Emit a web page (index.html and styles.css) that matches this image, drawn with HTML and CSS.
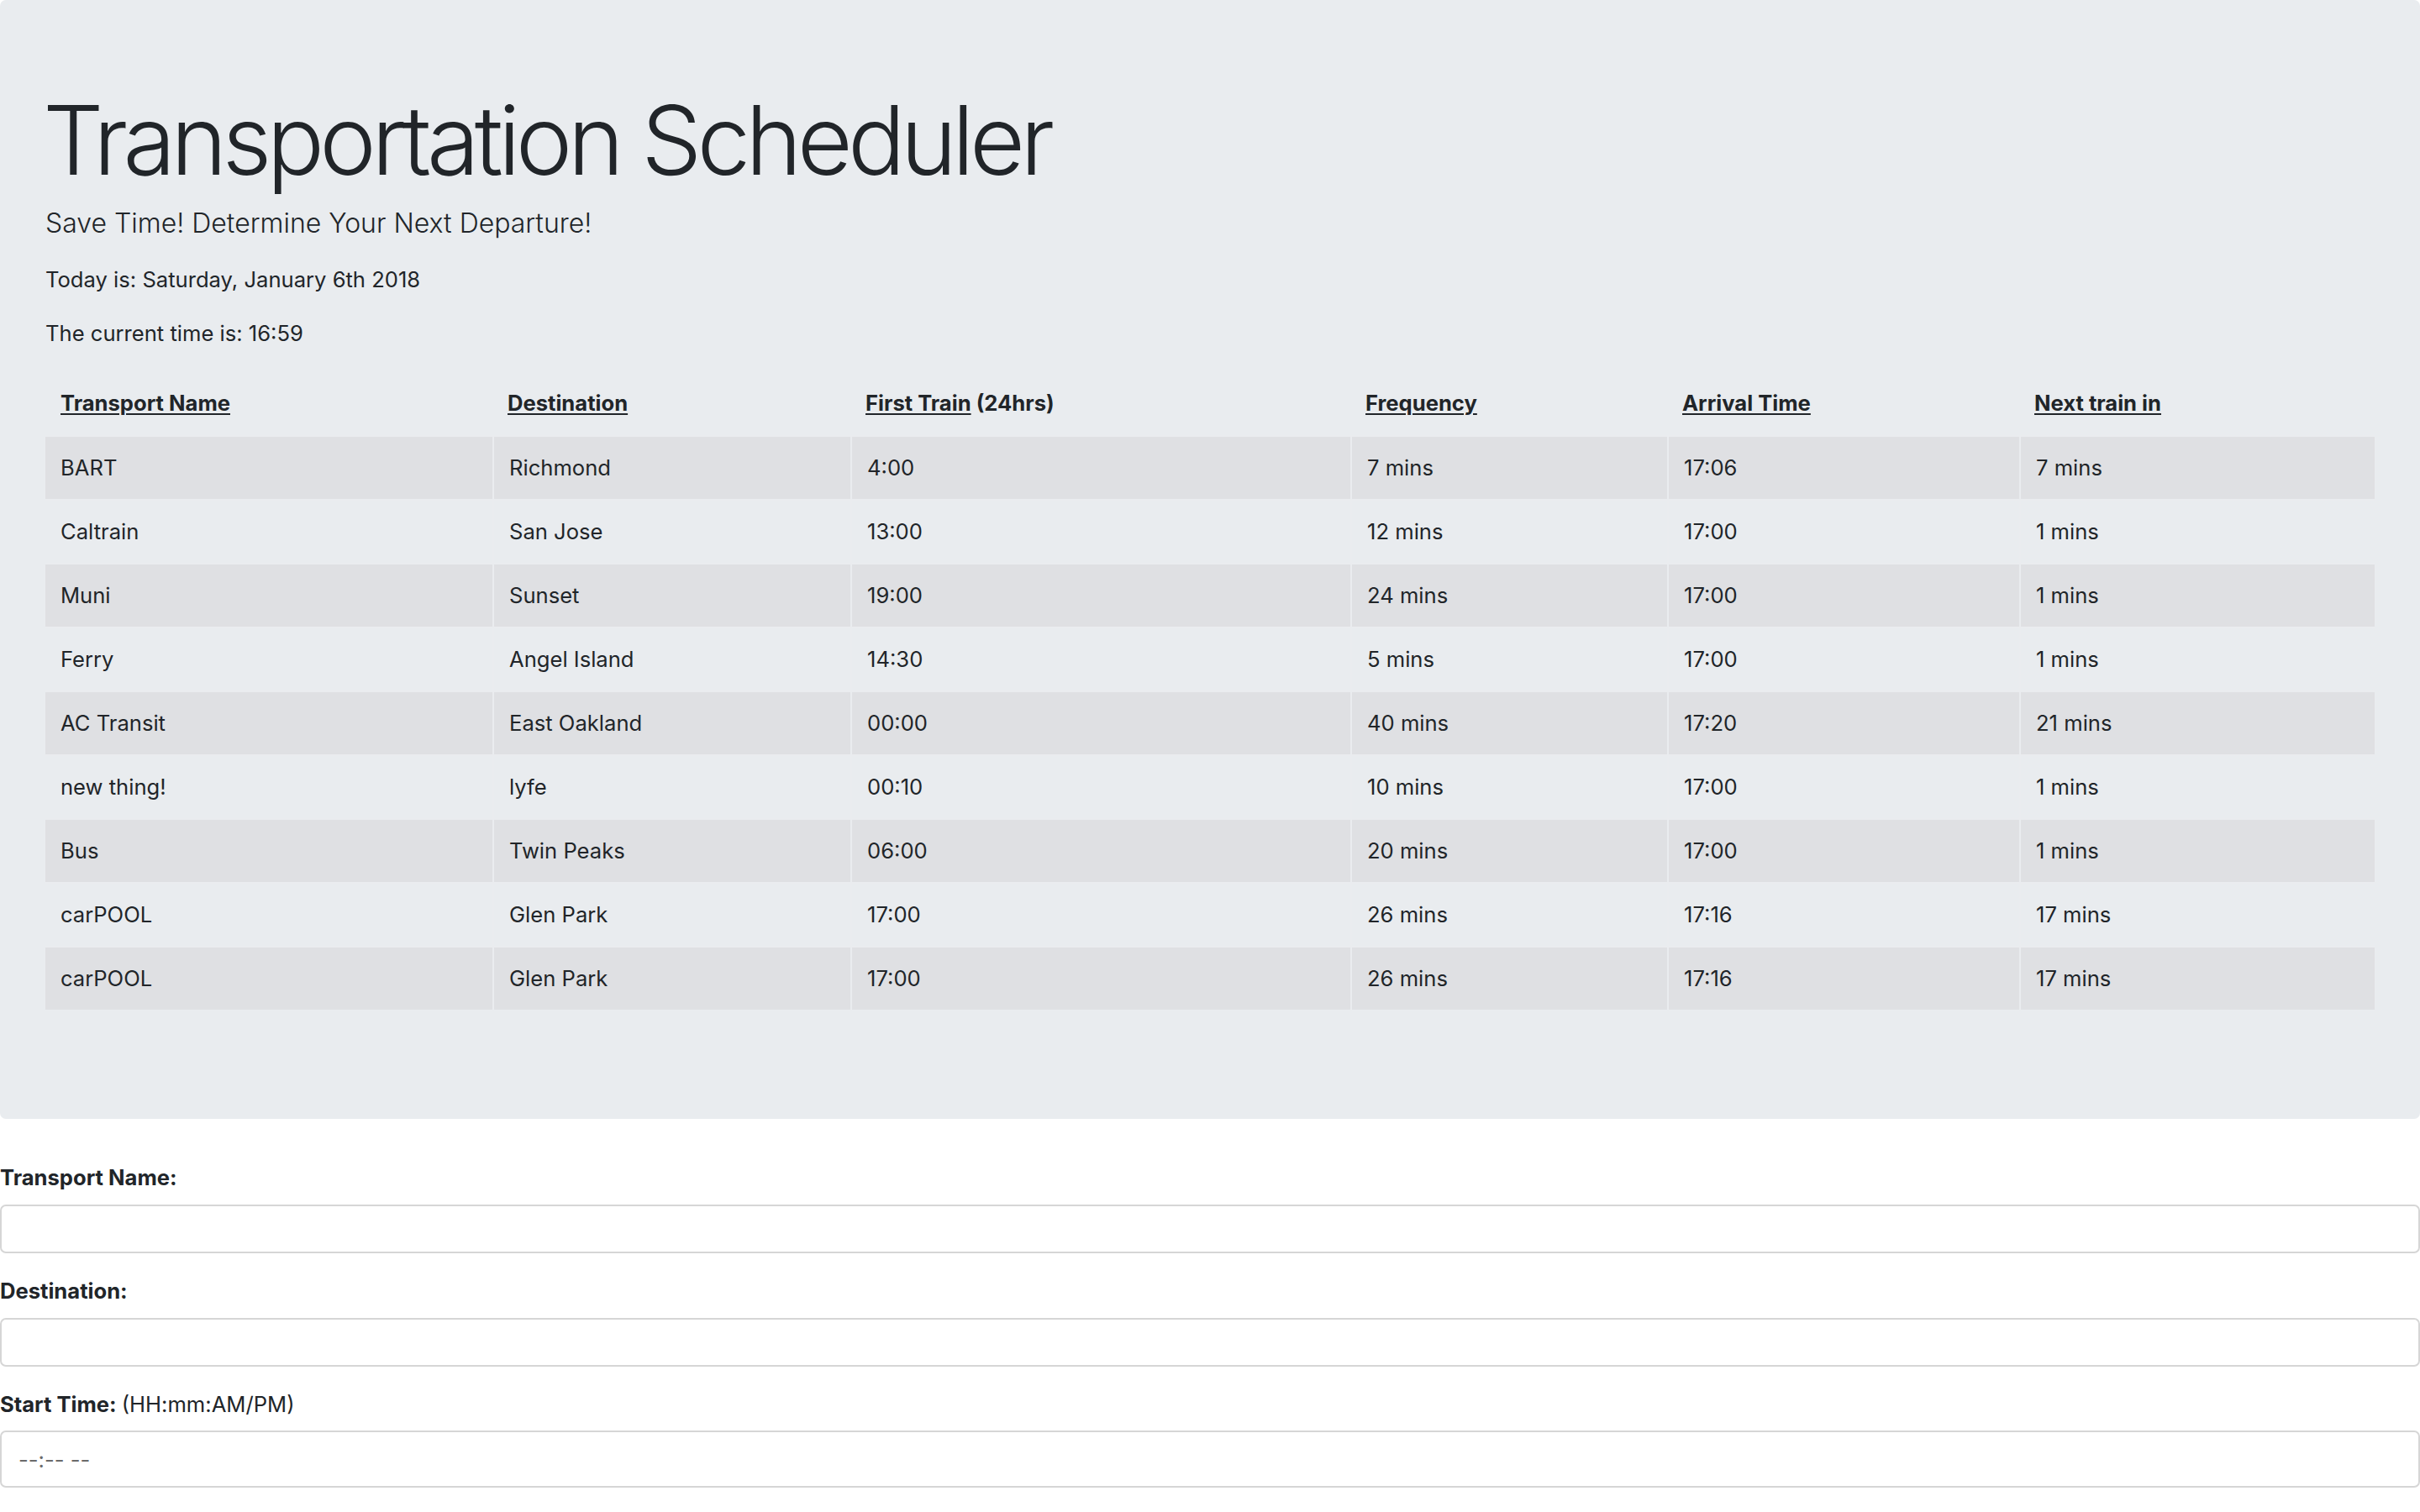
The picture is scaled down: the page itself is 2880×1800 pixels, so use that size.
FILE: index.html
```html
<!DOCTYPE html>
<html lang="en">
<head>
<meta charset="utf-8">
<title>Transportation Scheduler</title>
<link rel="stylesheet" href="styles.css">
</head>
<body>
<div class="jumbotron">
  <h1 class="title">Transportation Scheduler</h1>
  <p class="lead">Save Time! Determine Your Next Departure!</p>
  <p class="info">Today is: Saturday, January 6th 2018</p>
  <p class="info">The current time is: 16:59</p>
  <table class="schedule">
    <colgroup>
      <col class="c-name"><col class="c-dest"><col class="c-first"><col class="c-freq"><col class="c-arr"><col class="c-next">
    </colgroup>
    <thead>
      <tr>
        <th><a href="#">Transport Name</a></th>
        <th><a href="#">Destination</a></th>
        <th><a href="#">First Train</a> (24hrs)</th>
        <th><a href="#">Frequency</a></th>
        <th><a href="#">Arrival Time</a></th>
        <th><a href="#">Next train in</a></th>
      </tr>
    </thead>
    <tbody>
      <tr><td>BART</td><td>Richmond</td><td>4:00</td><td>7 mins</td><td>17:06</td><td>7 mins</td></tr>
      <tr><td>Caltrain</td><td>San Jose</td><td>13:00</td><td>12 mins</td><td>17:00</td><td>1 mins</td></tr>
      <tr><td>Muni</td><td>Sunset</td><td>19:00</td><td>24 mins</td><td>17:00</td><td>1 mins</td></tr>
      <tr><td>Ferry</td><td>Angel Island</td><td>14:30</td><td>5 mins</td><td>17:00</td><td>1 mins</td></tr>
      <tr><td>AC Transit</td><td>East Oakland</td><td>00:00</td><td>40 mins</td><td>17:20</td><td>21 mins</td></tr>
      <tr><td>new thing!</td><td>lyfe</td><td>00:10</td><td>10 mins</td><td>17:00</td><td>1 mins</td></tr>
      <tr><td>Bus</td><td>Twin Peaks</td><td>06:00</td><td>20 mins</td><td>17:00</td><td>1 mins</td></tr>
      <tr><td>carPOOL</td><td>Glen Park</td><td>17:00</td><td>26 mins</td><td>17:16</td><td>17 mins</td></tr>
      <tr><td>carPOOL</td><td>Glen Park</td><td>17:00</td><td>26 mins</td><td>17:16</td><td>17 mins</td></tr>
    </tbody>
  </table>
</div>
<form class="add-form">
  <div class="form-group">
    <label class="label" for="name">Transport Name:</label>
    <input class="field" type="text" id="name">
  </div>
  <div class="form-group">
    <label class="label" for="dest">Destination:</label>
    <input class="field" type="text" id="dest">
  </div>
  <div class="form-group">
    <label class="label" for="start">Start Time: <span class="hint">(HH:mm:AM/PM)</span></label>
    <input class="field field-time" type="text" id="start" placeholder="--:-- --">
  </div>
</form>
</body>
</html>
```

FILE: styles.css
```css
* { box-sizing: border-box; }

html, body {
  margin: 0;
  padding: 0;
  background: #ffffff;
  color: #212529;
  font-family: "Inter", "Roboto", "Liberation Sans", Arial, sans-serif;
  font-size: 25.6px;
  line-height: 1.5;
}

.jumbotron {
  background: #e9ecef;
  padding: 104px 54px 104px;
  border-radius: 7px;
  margin-bottom: 51.5px;
}

.title {
  margin: 0 0 11.6px -3px;
  font-weight: 300;
  font-size: 114px;
  line-height: 126.5px;
  letter-spacing: -5.8px;
  color: #212529;
}

.lead {
  margin: 0 0 24px;
  font-size: 32px;
  font-weight: 300;
  line-height: 48px;
}

.info {
  margin: 0 0 25.6px;
  font-size: 25.6px;
  line-height: 38.4px;
}

.schedule {
  width: 100%;
  border-collapse: separate;
  border-spacing: 0;
  margin: 0 0 25.6px;
}

.c-name { width: 532px; }
.c-dest { width: 426px; }
.c-first { width: 595px; }
.c-freq { width: 377px; }
.c-arr { width: 419px; }
.c-next { width: 423px; }

.schedule th,
.schedule td {
  height: 76px;
  padding: 0 19px 0 18px;
  text-align: left;
  vertical-align: middle;
  font-size: 25.6px;
  line-height: 38.4px;
}

.schedule th {
  font-weight: 700;
}

.schedule th a {
  color: #212529;
  text-decoration: underline;
  text-decoration-thickness: 2px;
  text-underline-offset: 3px;
}

.schedule td {
  border-top: 2px solid #eaecef;
}

.schedule td + td {
  border-left: 2px solid #eaecef;
}

.schedule tbody tr:nth-child(odd) {
  background: #dfe0e3;
}

.add-form {
  display: block;
  margin: 0;
}

.form-group {
  margin-bottom: 26.5px;
}

.label {
  display: block;
  font-weight: 700;
  font-size: 25.6px;
  line-height: 38.4px;
  margin-bottom: 12px;
}

.hint {
  font-weight: 400;
}

.field {
  display: block;
  width: 100%;
  height: 58px;
  margin: 0;
  padding: 0 20px;
  border: 2px solid #d6d6d6;
  border-radius: 7px;
  background: #ffffff;
  font-family: inherit;
  font-size: 25.6px;
  color: #495057;
}

.field-time {
  height: 68px;
  font-size: 25.6px;
}

.field-time::placeholder {
  color: #6a6a6a;
  opacity: 1;
}
```
